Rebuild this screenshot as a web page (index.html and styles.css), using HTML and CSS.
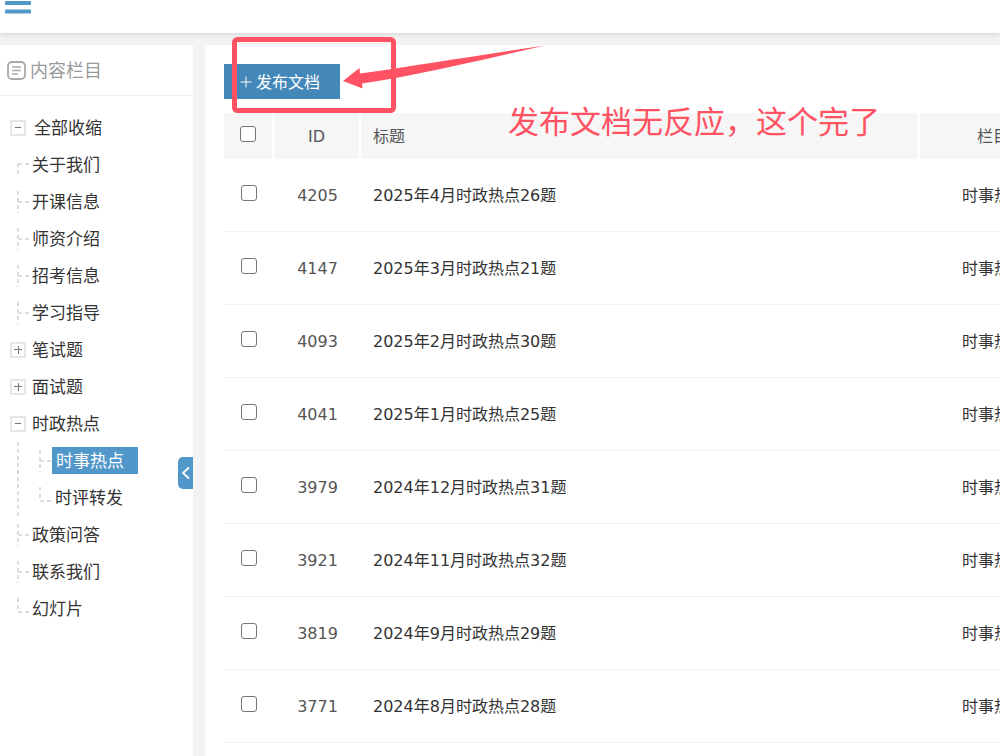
FILE: index.html
```html
<!DOCTYPE html>
<html lang="zh-CN">
<head>
  <meta charset="UTF-8" />
  <meta name="viewport" content="width=device-width, initial-scale=1.0" />
  <title>内容栏目</title>
  <link rel="stylesheet" href="styles.css">
</head>
<body>
  <header class="topbar">
    <button class="menu-btn" type="button" aria-label="菜单">
      <svg width="26" height="16" viewBox="0 0 26 16"><rect y="1" width="26" height="4" rx="1"/><rect y="9.500" width="26" height="4" rx="1"/></svg>
    </button>
  </header>

  <div class="layout">
    <aside class="sidebar">
      <h2 class="side-title">
        <svg width="19" height="19" viewBox="0 0 19 19" fill="none" stroke="#aaa"><rect x="1" y="1" width="17" height="17" rx="4" stroke-width="1.8"/><path d="M5 6h9M5 9.5h9M5 13h6" stroke-width="1.5"/></svg>
        <span>内容栏目</span>
      </h2>
      <ul class="tree">
        <li class="all"><button class="fold minus" type="button" aria-label="收缩"></button><a href="#">全部收缩</a></li>
        <li><i class="branch first"></i><a href="#">关于我们</a></li>
        <li><i class="branch"></i><a href="#">开课信息</a></li>
        <li><i class="branch"></i><a href="#">师资介绍</a></li>
        <li><i class="branch"></i><a href="#">招考信息</a></li>
        <li><i class="branch"></i><a href="#">学习指导</a></li>
        <li><button class="fold plus" type="button" aria-label="展开"></button><a href="#">笔试题</a></li>
        <li><button class="fold plus" type="button" aria-label="展开"></button><a href="#">面试题</a></li>
        <li><button class="fold minus" type="button" aria-label="收缩"></button><a href="#">时政热点</a></li>
        <li class="group">
          <ul>
            <li><i class="branch"></i><a class="active" href="#">时事热点</a></li>
            <li><i class="branch last"></i><a href="#">时评转发</a></li>
          </ul>
        </li>
        <li><i class="branch"></i><a href="#">政策问答</a></li>
        <li><i class="branch"></i><a href="#">联系我们</a></li>
        <li><i class="branch last"></i><a href="#">幻灯片</a></li>
      </ul>
      <button class="collapse" type="button" aria-label="收起侧栏">
        <svg width="10" height="14" viewBox="0 0 10 14" fill="none" stroke="#fff" stroke-width="1.8"><path d="M8 1.5L2 7l6 5.5"/></svg>
      </button>
    </aside>

    <main class="content">
      <button class="publish" type="button">
        <svg width="12" height="12" viewBox="0 0 12 12" stroke="#fff"><path d="M6 .5v11M.5 6h11"/></svg>
        <span>发布文档</span>
      </button>
      <table class="docs">
        <thead>
          <tr><th class="check"><input type="checkbox" aria-label="全选"></th><th class="id">ID</th><th class="title">标题</th><th class="cat">栏目</th></tr>
        </thead>
        <tbody>
          <tr><td class="check"><input type="checkbox" aria-label="4205"></td><td class="id">4205</td><td class="title">2025年4月时政热点26题</td><td class="cat">时事热点</td></tr>
          <tr><td class="check"><input type="checkbox" aria-label="4147"></td><td class="id">4147</td><td class="title">2025年3月时政热点21题</td><td class="cat">时事热点</td></tr>
          <tr><td class="check"><input type="checkbox" aria-label="4093"></td><td class="id">4093</td><td class="title">2025年2月时政热点30题</td><td class="cat">时事热点</td></tr>
          <tr><td class="check"><input type="checkbox" aria-label="4041"></td><td class="id">4041</td><td class="title">2025年1月时政热点25题</td><td class="cat">时事热点</td></tr>
          <tr><td class="check"><input type="checkbox" aria-label="3979"></td><td class="id">3979</td><td class="title">2024年12月时政热点31题</td><td class="cat">时事热点</td></tr>
          <tr><td class="check"><input type="checkbox" aria-label="3921"></td><td class="id">3921</td><td class="title">2024年11月时政热点32题</td><td class="cat">时事热点</td></tr>
          <tr><td class="check"><input type="checkbox" aria-label="3819"></td><td class="id">3819</td><td class="title">2024年9月时政热点29题</td><td class="cat">时事热点</td></tr>
          <tr><td class="check"><input type="checkbox" aria-label="3771"></td><td class="id">3771</td><td class="title">2024年8月时政热点28题</td><td class="cat">时事热点</td></tr>
        </tbody>
      </table>
    </main>
  </div>

  <svg class="mark" width="320" height="80" viewBox="0 0 320 80">
    <rect x="4.500" y="4.500" width="159" height="71" rx="3" fill="none" stroke="#ff5263" stroke-width="5"/>
    <path d="M113 46L129.500 33l.5 5.500C190 30 250 20 315 10.500 255 24 195 39 132 48.500l.5 5z" fill="#ff5263"/>
  </svg>
  <p class="note">发布文档无反应，这个完了</p>
</body>
</html>
```

FILE: styles.css
```css
* { box-sizing: border-box; }
body { margin: 0; min-height: 100vh; display: flex; flex-direction: column; overflow: hidden; position: relative; background: #f3f3f3; color: #333; font-family: "DejaVu Sans", "Noto Sans CJK SC", sans-serif; font-size: 16px; }
button { font: inherit; padding: 0; border: none; cursor: pointer; }
svg { display: block; }
a { color: inherit; text-decoration: none; }
ul { list-style: none; margin: 0; padding: 0; }

.topbar { height: 33px; padding-left: 5px; background: #fff; box-shadow: 0 1px 6px rgba(0,0,0,0.14); }
.menu-btn { background: none; }
.menu-btn svg { fill: #5197ca; }

.layout { flex: 1; display: flex; gap: 12px; margin-top: 12px; }

.sidebar { position: relative; flex: 0 0 193px; background: #fff; font-family: "Noto Sans CJK SC", sans-serif; font-size: 17px; }
.side-title { display: flex; align-items: center; gap: 4px; height: 51px; margin: 0; padding-left: 7px; border-bottom: 1px solid #eee; color: #999; font-size: 18px; font-weight: normal; }
.side-title span { padding-bottom: 2px; }
.tree { padding: 13px 0 0 10px; }
.tree li { display: flex; align-items: center; height: 37px; }
.tree a { margin-left: 6px; padding-bottom: 2px; line-height: 25px; }
.tree .all a { margin-left: 8px; }
.tree .group { height: auto; padding-left: 22px; background: repeating-linear-gradient(#ddd 0 4px, transparent 4px 7px) 7px 0 / 2px 100% no-repeat; }
.tree .group a { padding-left: 1px; }
.tree .group .active { margin-left: 4px; padding: 0 14px 2px 4px; background: #5197ca; color: #fff; }

.fold { width: 16px; height: 16px; border: 2px solid #e6e6e6; color: #777; }
.minus { background: linear-gradient(currentColor, currentColor) center / 6px 1px no-repeat; }
.plus { background: linear-gradient(currentColor, currentColor) center / 8px 1px no-repeat, linear-gradient(currentColor, currentColor) center / 1px 8px no-repeat; }

/* dashed connector lines */
.branch { width: 19px; height: 22px; margin-right: -3px; background: repeating-linear-gradient(#ddd 0 4px, transparent 4px 7px) 7px 0 / 2px 100% no-repeat, repeating-linear-gradient(90deg, #ddd 0 4px, transparent 4px 7px) 8px 10px / 11px 2px no-repeat; }
.branch.first { background-size: 2px 12px, 11px 2px; background-position: 7px 9px, 8px 9px; }
.branch.last { background-size: 2px 14px, 11px 2px; background-position: 7px 0, 8px 13px; }

.collapse { position: absolute; right: 0; top: 412px; width: 15px; height: 32px; padding-left: 3px; border-radius: 5px 0 0 5px; background: #5197ca; }

.content { flex: 1; min-width: 0; padding: 19px 0 0 19px; background: #fff; overflow: hidden; }
.publish { display: flex; align-items: center; gap: 4px; height: 35px; padding: 0 20px 0 16px; background: #4487b9; color: #fff; }
.publish span { padding-bottom: 2px; }

.docs { width: 100%; min-width: 844px; margin-top: 14px; border-collapse: separate; border-spacing: 0; table-layout: fixed; }
.docs th { height: 46px; padding: 0; background: #f6f6f6; border-right: 2px solid #fff; color: #555; font-weight: normal; }
.docs td { height: 73px; padding: 0; border-bottom: 1px solid #f2f2f2; }
.docs .check { width: 50px; }
.docs .id { width: 87px; text-align: center; color: #555; }
.docs .title { text-align: left; padding: 0 0 2px 12px; }
.docs .cat { width: 148px; padding-bottom: 2px; text-align: center; }
.docs input { appearance: none; display: block; width: 16px; height: 16px; margin: 0 auto 4px; border: 1px solid #767676; border-radius: 3px; background: #fff; }

/* red annotation over the page */
.mark { position: absolute; left: 230px; top: 35px; pointer-events: none; }
.note { position: absolute; left: 508px; top: 97px; margin: 0; color: #ff5263; font-family: "Noto Sans CJK SC", sans-serif; font-size: 31px; line-height: 45px; white-space: nowrap; }
```
